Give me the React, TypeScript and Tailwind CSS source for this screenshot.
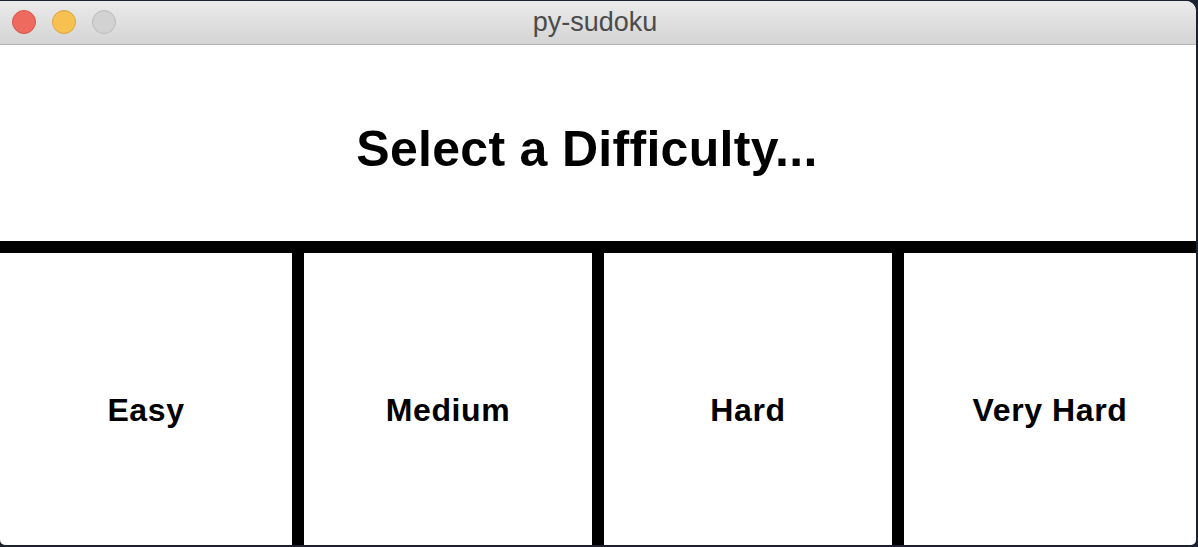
const levels = ["Easy", "Medium", "Hard", "Very Hard"];

export default function App() {
  return (
    <div className="w-[1198px] h-[547px] bg-[#1b2131] pt-px pr-[2px] pb-[2px] font-['Liberation_Sans',Arial,sans-serif]">
      <div className="flex h-full flex-col overflow-hidden rounded-tr-[10px] rounded-b-[5px] bg-white">
        {/* Title bar */}
        <div className="relative flex h-[44px] shrink-0 items-center border-b border-[#b4b4b4] bg-gradient-to-b from-[#ebebeb] to-[#d4d4d4]">
          <div className="flex items-center gap-4 pl-3 -mt-[2px]">
            <span className="h-6 w-6 rounded-full border border-[#d9564a] bg-[#ee6a5f]" />
            <span className="h-6 w-6 rounded-full border border-[#dba53f] bg-[#f6c150]" />
            <span className="h-6 w-6 rounded-full border border-[#bcbcbc] bg-[#d2d2d2]" />
          </div>
          <div className="absolute inset-0 flex items-center justify-center text-[27px] text-[#4b4b4b] font-['Helvetica','Liberation_Sans',sans-serif] ml-[-6px] mt-[-1px]">
            py-sudoku
          </div>
        </div>

        {/* Heading */}
        <div className="flex h-[196px] shrink-0 justify-center pt-[79px] pr-[22px]">
          <h1 className="text-[50px] leading-[50px] font-bold tracking-[0.3px] text-black">
            Select a Difficulty...
          </h1>
        </div>

        <div className="h-[12px] shrink-0 bg-black" />

        {/* Difficulty buttons */}
        <div className="flex flex-1">
          {levels.map((level, i) => (
            <div
              key={level}
              className={
                i === 0
                  ? "flex w-[304px] justify-center border-r-[12px] border-black pt-[141px]"
                  : i === 3
                  ? "flex w-[292px] justify-center pt-[141px]"
                  : "flex w-[300px] justify-center border-r-[12px] border-black pt-[141px]"
              }
            >
              <span className="text-[32px] leading-[32px] font-bold tracking-[0.6px] text-black">
                {level}
              </span>
            </div>
          ))}
        </div>
      </div>
    </div>
  );
}
